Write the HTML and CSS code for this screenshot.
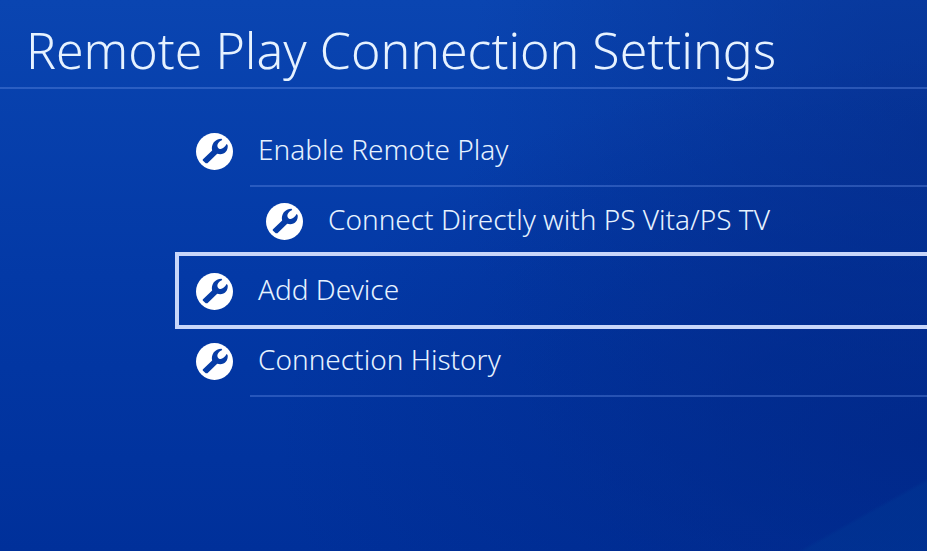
FILE: index.html
```html
<!DOCTYPE html>
<html lang="en">
<head>
    <meta charset="UTF-8">
    <meta name="viewport" content="width=device-width, initial-scale=1.0">
    <title>Remote Play Connection Settings</title>
    <link rel="stylesheet" href="styles.css">
</head>
<body>
    <!-- Wrench icon shared by all the rows -->
    <svg class="icon-defs" aria-hidden="true">
        <symbol id="wrench" viewBox="0 0 110 110">
            <circle cx="55" cy="55" r="55" fill="#fff"/>
            <path fill="#063ca6" d="M20 79 L48 52 C44 34 56 17 76 17 L78 21 C66 26 61 36 65 43 C71 52 84 47 91 33 L94 36 C97 54 82 68 63 62 L34 90 L29 90 L20 82 Z"/>
        </symbol>
    </svg>

    <header class="header">
        <h1>Remote Play Connection Settings</h1>
    </header>

    <main class="menu">
        <button class="row" type="button">
            <svg class="icon" aria-hidden="true"><use href="#wrench"/></svg>
            <span class="label line">Enable Remote Play</span>
        </button>
        <button class="row nested" type="button">
            <svg class="icon" aria-hidden="true"><use href="#wrench"/></svg>
            <span class="label">Connect Directly with PS Vita/PS TV</span>
        </button>
        <button class="row selected" type="button">
            <svg class="icon" aria-hidden="true"><use href="#wrench"/></svg>
            <span class="label">Add Device</span>
        </button>
        <button class="row" type="button">
            <svg class="icon" aria-hidden="true"><use href="#wrench"/></svg>
            <span class="label line">Connection History</span>
        </button>
    </main>
</body>
</html>
```
FILE: styles.css
```css
* {
    box-sizing: border-box;
}

body {
    margin: 0;
    min-height: 100vh;
    overflow-x: hidden;
    font-family: "Noto Sans", "Open Sans", sans-serif;
    font-weight: 300;
    color: #e6f2ff;
    background:
        linear-gradient(to bottom right, transparent 50%, rgba(0, 55, 148, 0.5) 53%) right bottom / 130px 73px no-repeat,
        radial-gradient(ellipse 70% 70% at 100% 80%, rgba(0, 38, 134, 0.75), transparent) no-repeat,
        radial-gradient(ellipse 50% 100% at 100% 25%, rgba(6, 46, 140, 0.7), transparent) no-repeat,
        linear-gradient(#0a45b1, #0339a6 50%, #00309a);
}

.icon-defs {
    position: absolute;
    width: 0;
    height: 0;
}

.header {
    height: 89px;
    padding: 15px 26px 0;
    border-bottom: 2px solid rgba(110, 150, 235, 0.35);
}

h1 {
    margin: 0;
    font-size: 50px;
    line-height: 70px;
    font-weight: 300;
    white-space: nowrap;
}

.menu {
    display: flex;
    flex-direction: column;
    padding: 28px 0 28px 175px;
}

.row {
    position: relative;
    display: flex;
    align-items: center;
    height: 70px;
    padding: 0 0 0 21px;
    border: none;
    background: none;
    color: inherit;
    font: inherit;
    font-size: 28px;
    line-height: 64px;
    text-align: left;
    cursor: pointer;
}

.nested {
    padding-left: 91px;
}

.icon {
    flex: none;
    width: 37px;
    height: 37px;
    margin: 0 17px 2px 0;
}

.label {
    flex: 1;
    height: 70px;
    padding-left: 8px;
    border-bottom: 2px solid transparent;
    white-space: nowrap;
}

.line {
    border-bottom-color: rgba(110, 150, 235, 0.35);
}

/* focus frame, runs off the right edge of the screen */
.selected::before {
    content: "";
    position: absolute;
    inset: -5px -4px -2px 0;
    border: 4px solid #c8d6fa;
}

.row:focus {
    outline: none;
}
```
